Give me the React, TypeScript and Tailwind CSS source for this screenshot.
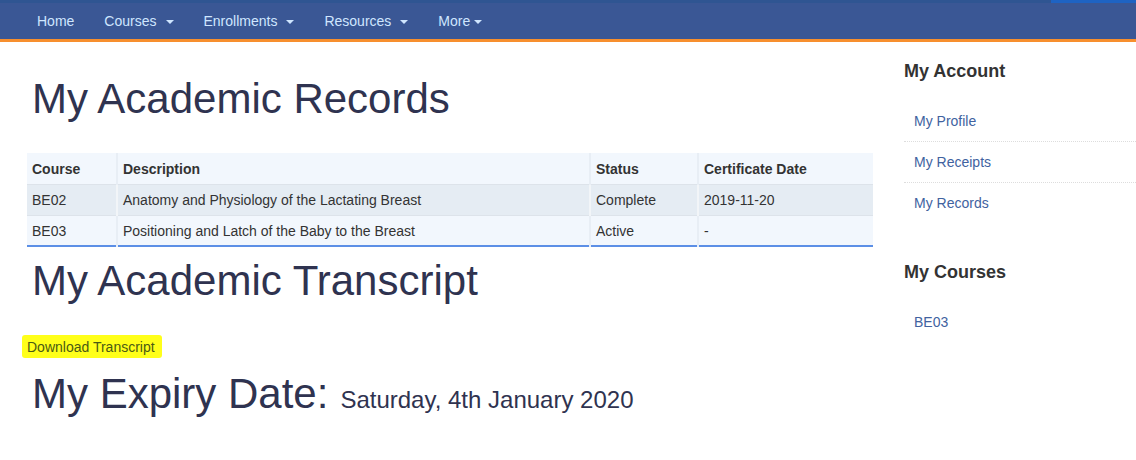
import React from "react";

const Caret = () => (
  <svg width="8" height="4" viewBox="0 0 8 4" className="ml-[9px] mt-[1px]">
    <path d="M0 0 L8 0 L4 4 Z" fill="#cfe6ff" />
  </svg>
);

export default function App() {
  return (
    <div className="w-[1136px] h-[460px] overflow-hidden bg-white font-['Liberation_Sans',Arial,sans-serif]">
      {/* Navbar */}
      <div className="relative h-[39px] bg-[#3a5795] border-t-[3px] border-[#2f5592]">
        <div className="absolute right-0 top-[-3px] h-[3px] w-[85px] bg-[#1e63c3]" />
        <div className="flex h-full items-center pl-[37px] text-[14px] text-[#cfe6ff]">
          <span className="mr-[30px]">Home</span>
          <span className="flex items-center mr-[30px]">Courses<Caret /></span>
          <span className="flex items-center mr-[30px]">Enrollments<Caret /></span>
          <span className="flex items-center mr-[30px]">Resources<Caret /></span>
          <span className="flex items-center">
            More
            <svg width="8" height="4" viewBox="0 0 8 4" className="ml-[4px] mt-[1px]">
              <path d="M0 0 L8 0 L4 4 Z" fill="#cfe6ff" />
            </svg>
          </span>
        </div>
      </div>
      <div className="h-[3px] bg-[#f78f2e]" />

      <div className="flex">
        {/* Main column */}
        <div className="w-[846px] ml-[27px] text-[#2f3350]">
          <h1 className="mt-[34px] ml-[5px] text-[42px] leading-[46px]">My Academic Records</h1>
          <table className="mt-[31px] w-[846px] border-collapse text-[14px] text-[#333]">
            <thead>
              <tr className="bg-[#f2f7fd] h-[31px]">
                <th className="w-[90px] text-left font-bold pl-[5px] pt-[2px] border-r-2 border-[#e8eef5]">Course</th>
                <th className="w-[473px] text-left font-bold pl-[5px] pt-[2px] border-r-2 border-[#e8eef5]">Description</th>
                <th className="w-[108px] text-left font-bold pl-[5px] pt-[2px] border-r-2 border-[#e8eef5]">Status</th>
                <th className="text-left font-bold pl-[5px] pt-[2px]">Certificate Date</th>
              </tr>
            </thead>
            <tbody>
              <tr className="bg-[#e5ecf3] h-[31px] border-t border-[#dde3ea]">
                <td className="pl-[5px] pt-[2px] border-r-2 border-[#f2f5f8]">BE02</td>
                <td className="pl-[5px] pt-[2px] border-r-2 border-[#f2f5f8]">Anatomy and Physiology of the Lactating Breast</td>
                <td className="pl-[5px] pt-[2px] border-r-2 border-[#f2f5f8]">Complete</td>
                <td className="pl-[5px] pt-[2px]">2019-11-20</td>
              </tr>
              <tr className="bg-[#f2f7fd] h-[31px] border-t border-[#dde3ea] border-b-2 border-b-[#5c8fe6]">
                <td className="pl-[5px] pt-[2px] border-r-2 border-[#e8eef5]">BE03</td>
                <td className="pl-[5px] pt-[2px] border-r-2 border-[#e8eef5]">Positioning and Latch of the Baby to the Breast</td>
                <td className="pl-[5px] pt-[2px] border-r-2 border-[#e8eef5]">Active</td>
                <td className="pl-[5px] pt-[2px]">-</td>
              </tr>
            </tbody>
          </table>
          <h1 className="mt-[11px] ml-[5px] text-[42px] leading-[46px]">My Academic Transcript</h1>
          <div className="mt-[31px] ml-[-5px] inline-block bg-[#ffff1a] pl-[5px] pr-[7px] pt-[4px] pb-[3px] text-[14px] leading-[16px] text-[#4a5a14] rounded-[3px]">
            Download Transcript
          </div>
          <div className="mt-[12px] ml-[5px] flex items-baseline">
            <span className="text-[42px] leading-[46px]">My Expiry Date:</span>
            <span className="ml-[12px] text-[24px]">Saturday, 4th January 2020</span>
          </div>
        </div>

        {/* Sidebar */}
        <div className="ml-[31px] flex-1">
          <h3 className="mt-[18px] text-[18px] font-bold leading-[22px] text-[#333]">My Account</h3>
          <ul className="mt-[19px] text-[14px] text-[#41629f]">
            <li className="px-[10px] py-[10px] leading-[20px] border-b border-dotted border-[#ddd]">My Profile</li>
            <li className="px-[10px] py-[10px] leading-[20px] border-b border-dotted border-[#ddd]">My Receipts</li>
            <li className="px-[10px] py-[10px] leading-[20px]">My Records</li>
          </ul>
          <h3 className="mt-[38px] text-[18px] font-bold leading-[22px] text-[#333]">My Courses</h3>
          <ul className="mt-[19px] text-[14px] text-[#41629f]">
            <li className="px-[10px] py-[10px] leading-[20px]">BE03</li>
          </ul>
        </div>
      </div>
    </div>
  );
}
